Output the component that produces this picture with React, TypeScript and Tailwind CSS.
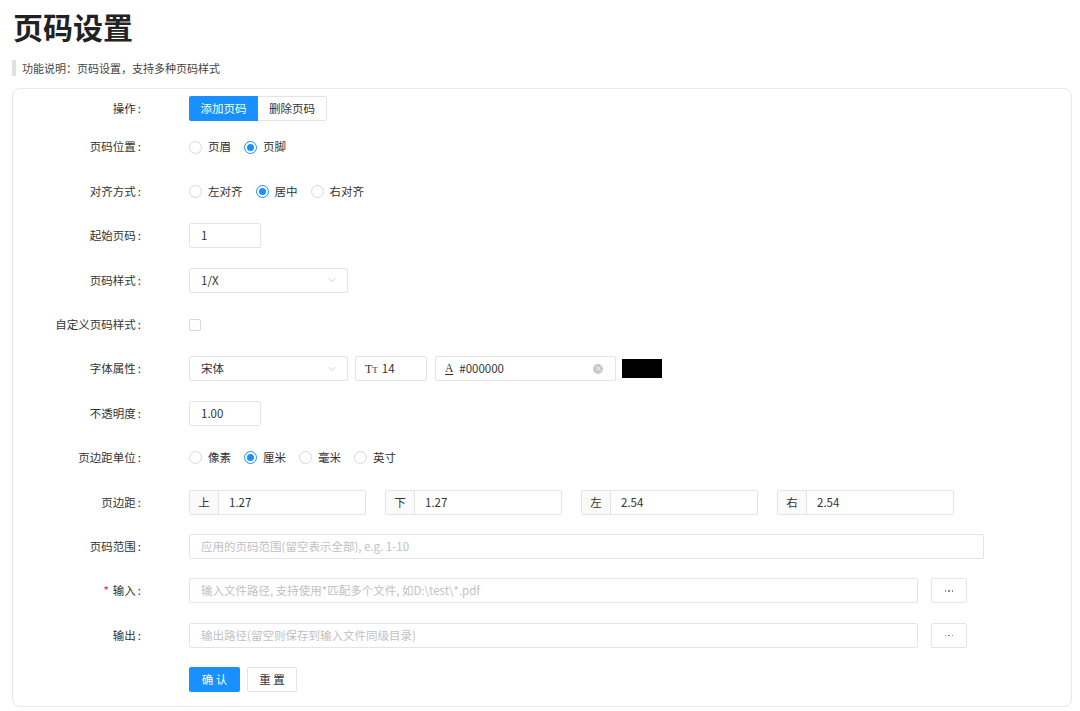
import { ChevronDown, X } from "lucide-react";
import type { ReactNode } from "react";

const font = { fontFamily: '"Noto Sans CJK SC", "Noto Sans", sans-serif' };

function Row({
  label,
  required,
  first,
  second,
  children,
}: {
  label: string;
  required?: boolean;
  first?: boolean;
  second?: boolean;
  children: ReactNode;
}) {
  return (
    <div
      className={`flex items-center h-[25px] ${
        first ? "" : second ? "mt-[13.5px]" : "mt-[19.4px]"
      }`}
    >
      <div className="w-[128px] shrink-0 text-right text-[11.5px] text-[#333] whitespace-nowrap">
        {required && <span className="text-[#f5222d] mr-1">*</span>}
        {label}
        <span className="ml-[2px]">:</span>
      </div>
      <div className="ml-[48px] flex items-center h-full">{children}</div>
    </div>
  );
}

function Radio({ label, checked }: { label: string; checked?: boolean }) {
  return (
    <label className="flex items-center mr-[13px] text-[11.5px] text-[#333]">
      <span
        className={`w-[13px] h-[13px] rounded-full border flex items-center justify-center ${
          checked ? "border-[#1890ff]" : "border-[#d9d9d9]"
        }`}
      >
        {checked && <span className="w-[7px] h-[7px] rounded-full bg-[#1890ff]" />}
      </span>
      <span className="ml-[6px]">{label}</span>
    </label>
  );
}

function Input({ value, placeholder, w }: { value?: string; placeholder?: string; w: string }) {
  return (
    <div
      className={`${w} h-[25px] border border-[#e4e4e4] rounded-[2px] px-[11px] flex items-center text-[11.5px] ${
        value ? "text-[#333]" : "text-[#bfbfbf]"
      }`}
    >
      {value ?? placeholder}
    </div>
  );
}

function Select({ value }: { value: string }) {
  return (
    <div className="w-[159px] h-[25px] border border-[#e4e4e4] rounded-[2px] pl-[11px] pr-[9px] flex items-center justify-between text-[11.5px] text-[#333]">
      <span>{value}</span>
      <ChevronDown className="w-[12px] h-[12px] text-[#c0c0c0]" strokeWidth={1.5} />
    </div>
  );
}

function Margin({ side, value }: { side: string; value: string }) {
  return (
    <div className="w-[177px] h-[25px] border border-[#e4e4e4] rounded-[2px] flex items-center text-[11.5px] text-[#333]">
      <div className="w-[29px] h-full bg-[#fafafa] border-r border-[#e4e4e4] flex items-center justify-center">
        {side}
      </div>
      <div className="px-[10px]">{value}</div>
    </div>
  );
}

function Browse() {
  return (
    <div className="w-[36px] h-[25px] ml-[13px] border border-[#e4e4e4] rounded-[2px] flex items-center justify-center gap-[2px]">
      <span className="w-[1.5px] h-[1.5px] bg-[#888]" />
      <span className="w-[1.5px] h-[1.5px] bg-[#888]" />
      <span className="w-[1.5px] h-[1.5px] bg-[#888]" />
    </div>
  );
}

export default function App() {
  return (
    <div className="bg-white min-h-screen px-[12px] pt-[6px]" style={font}>
      <h1 className="text-[30px] font-bold text-[#222] leading-[40px] ml-[1px]">页码设置</h1>
      <div className="mt-[14px] border-l-[4px] border-[#e0e0e0] pl-[6px] text-[11px] text-[#444] leading-[16px]">
        功能说明：页码设置，支持多种页码样式
      </div>
      <div className="mt-[12px] w-[1060px] border border-[#e8e8e8] rounded-[8px] pt-[7px] pb-[14px]">
        <Row label="操作" first>
          <div className="flex h-full text-[11.5px]">
            <div className="w-[69px] h-full bg-[#1890ff] text-white flex items-center justify-center rounded-l-[2px]">
              添加页码
            </div>
            <div className="w-[69px] h-full border border-l-0 border-[#e4e4e4] text-[#333] flex items-center justify-center rounded-r-[2px]">
              删除页码
            </div>
          </div>
        </Row>
        <Row label="页码位置" second>
          <Radio label="页眉" />
          <Radio label="页脚" checked />
        </Row>
        <Row label="对齐方式">
          <Radio label="左对齐" />
          <Radio label="居中" checked />
          <Radio label="右对齐" />
        </Row>
        <Row label="起始页码">
          <Input value="1" w="w-[72px]" />
        </Row>
        <Row label="页码样式">
          <Select value="1/X" />
        </Row>
        <Row label="自定义页码样式">
          <div className="w-[12px] h-[12px] border border-[#d9d9d9] rounded-[2px]" />
        </Row>
        <Row label="字体属性">
          <Select value="宋体" />
          <div className="ml-[7px] w-[72px] h-[25px] border border-[#e4e4e4] rounded-[2px] px-[9px] flex items-center text-[11.5px] text-[#333]">
            <span className="text-[12px] mr-[4px]" style={{ fontFamily: '"Liberation Serif", serif' }}>
              T<span className="text-[9px]">T</span>
            </span>
            14
          </div>
          <div className="ml-[8px] w-[181px] h-[25px] border border-[#e4e4e4] rounded-[2px] pl-[9px] pr-[12px] flex items-center justify-between text-[11.5px] text-[#333]">
            <span className="flex items-center">
              <span className="underline underline-offset-2 mr-[6px]" style={{ fontFamily: '"Liberation Serif", serif' }}>A</span>
              #000000
            </span>
            <span className="w-[10px] h-[10px] rounded-full bg-[#c8c8c8] flex items-center justify-center">
              <X className="w-[7px] h-[7px] text-white" strokeWidth={3} />
            </span>
          </div>
          <div className="ml-[6px] w-[40px] h-[19px] bg-black" />
        </Row>
        <Row label="不透明度">
          <Input value="1.00" w="w-[72px]" />
        </Row>
        <Row label="页边距单位">
          <Radio label="像素" />
          <Radio label="厘米" checked />
          <Radio label="毫米" />
          <Radio label="英寸" />
        </Row>
        <Row label="页边距">
          <div className="flex gap-[19px]">
            <Margin side="上" value="1.27" />
            <Margin side="下" value="1.27" />
            <Margin side="左" value="2.54" />
            <Margin side="右" value="2.54" />
          </div>
        </Row>
        <Row label="页码范围">
          <Input placeholder="应用的页码范围(留空表示全部), e.g. 1-10" w="w-[795px]" />
        </Row>
        <Row label="输入" required>
          <Input placeholder="输入文件路径, 支持使用*匹配多个文件, 如D:\test\*.pdf" w="w-[729px]" />
          <Browse />
        </Row>
        <Row label="输出">
          <Input placeholder="输出路径(留空则保存到输入文件同级目录)" w="w-[729px]" />
          <Browse />
        </Row>
        <div className="flex items-center h-[25px] mt-[19.4px] ml-[176px] text-[11.5px]">
          <div className="w-[51px] h-full bg-[#1890ff] text-white rounded-[2px] flex items-center justify-center">
            确 认
          </div>
          <div className="ml-[7px] w-[50px] h-full border border-[#e4e4e4] text-[#333] rounded-[2px] flex items-center justify-center">
            重 置
          </div>
        </div>
      </div>
    </div>
  );
}
